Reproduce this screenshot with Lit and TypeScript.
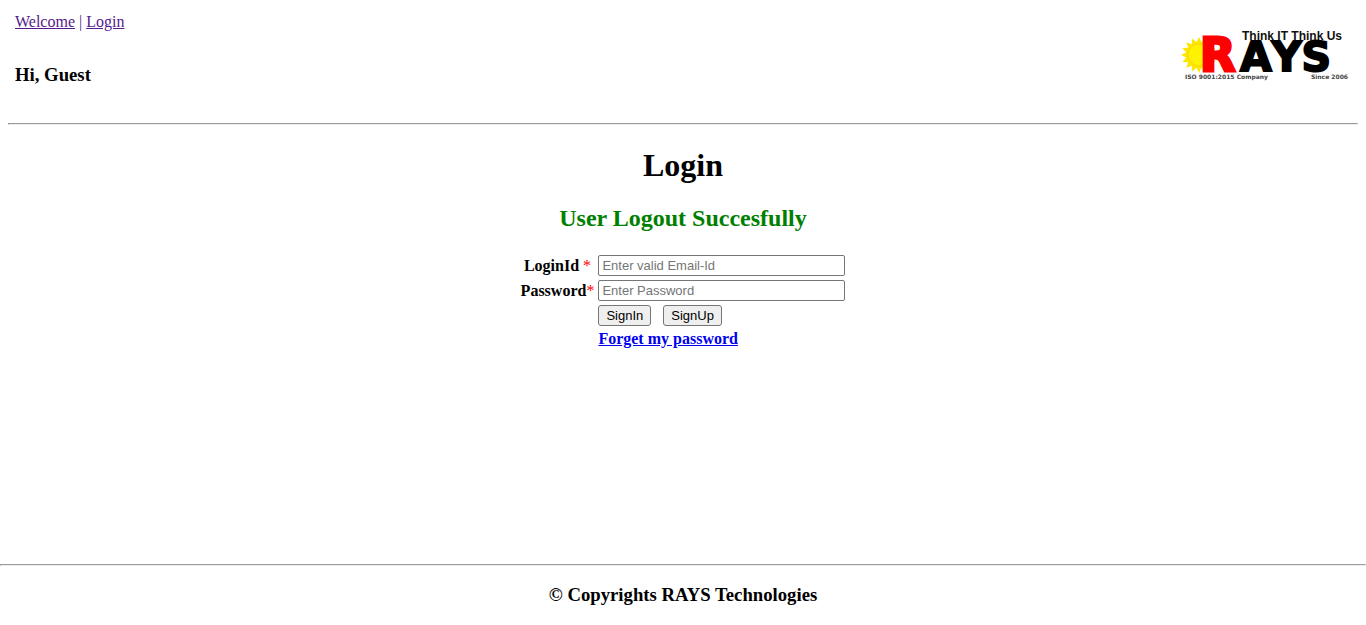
import { LitElement, html, css, svg } from "lit";
import { customElement } from "lit/decorators.js";

// Sixteen-pointed sun behind the wordmark.
const sunPoints = Array.from({ length: 32 }, (_, i) => {
  const r = i % 2 ? 13 : 18;
  const a = (i * Math.PI) / 16;
  return `${(19 + r * Math.cos(a)).toFixed(1)},${(25 + r * Math.sin(a)).toFixed(1)}`;
}).join(" ");

@customElement("rays-logo")
class RaysLogo extends LitElement {
  static styles = css`
    :host { display: block; }
    .logo { display: block; overflow: visible; }
    text { font-family: "DejaVu Sans", sans-serif; font-weight: bold; font-kerning: none; }
    .initial { font-size: 46px; fill: #f00; stroke: #f00; stroke-width: 3px; }
    .name { font-size: 41px; fill: #000; stroke: #000; stroke-width: 2px; }
    .tagline { font-family: "Liberation Sans", sans-serif; font-size: 12px; fill: #111; }
    .note { font-size: 6px; fill: #444; }
  `;
  render() {
    return html`<svg class="logo" width="172" height="50" viewBox="0 0 172 50" role="img" aria-label="RAYS">
      ${svg`<polygon points=${sunPoints} fill="#ffe600"/>
      <circle cx="19" cy="25" r="11" fill="#fff200" stroke="#f5d800" stroke-width="1"/>`}
      <text class="initial" x="20" y="41">R</text>
      <text class="name" x="60" y="41">AYS</text>
      <text class="tagline" x="62" y="10">Think IT Think Us</text>
      <text class="note" x="5" y="49">ISO 9001:2015 Company</text>
      <text class="note" x="168" y="49" text-anchor="end">Since 2006</text>
    </svg>`;
  }
}

@customElement("app-root")
class AppRoot extends LitElement {
  static styles = css`
    :host {
      display: flex;
      flex-direction: column;
      min-height: 100vh;
      color: #000;
      background: #fff;
      font-family: "Liberation Serif", "Times New Roman", serif;
      font-size: 16px;
      line-height: 18px;
    }
    hr { margin: 0; width: auto; }
    h1, h2, h3 { margin: 0; line-height: normal; }
    .top { padding: 0 8px; }
    .bar {
      display: flex;
      justify-content: space-between;
      align-items: flex-start;
      padding: 13px 6px 37px 7px;
    }
    .nav { color: #551a8b; margin-bottom: 33px; }
    .visited { color: #551a8b; }
    .brand { padding-top: 17px; }
    main {
      flex: 1;
      display: flex;
      flex-direction: column;
      align-items: center;
      padding: 22px 8px;
    }
    h1 { font-size: 32px; margin-bottom: 21px; }
    h2 { font-size: 24px; margin-bottom: 23px; color: #008000; }
    .form {
      display: grid;
      grid-template-columns: auto 247px;
      gap: 4px;
      align-items: center;
    }
    .label { font-weight: bold; text-align: center; }
    .required { color: #f00; font-weight: normal; }
    .second { grid-column: 2; }
    .field, .button {
      box-sizing: border-box;
      height: 21px;
      margin: 0;
      border: 1px solid #767676;
      font-family: "Liberation Sans", Arial, sans-serif;
      font-size: 13px;
      line-height: 15px;
      color: #000;
    }
    .field { width: 100%; padding: 1px 3px; border-radius: 2px; background: #fff; }
    .field::placeholder { color: #757575; }
    .button { padding: 1px 7px; border-radius: 3px; background: #efefef; }
    .actions { display: flex; gap: 12px; }
    .forget { color: #00e; font-weight: bold; }
    footer { text-align: center; }
    footer h3 { margin: 18px 0 19px; }
  `;
  render() {
    return html`
      <header class="top">
        <div class="bar">
          <div>
            <nav class="nav"><a class="visited" href="#welcome">Welcome</a> | <a class="visited" href="#login">Login</a></nav>
            <h3>Hi, Guest</h3>
          </div>
          <rays-logo class="brand"></rays-logo>
        </div>
        <hr />
      </header>
      <main>
        <h1>Login</h1>
        <h2 role="status">User Logout Succesfully</h2>
        <form class="form" @submit=${(e: Event) => e.preventDefault()}>
          <label class="label" for="login">LoginId <span class="required">*</span></label>
          <input class="field" id="login" type="text" placeholder="Enter valid Email-Id" />
          <label class="label" for="password">Password<span class="required">*</span></label>
          <input class="field" id="password" type="password" placeholder="Enter Password" />
          <div class="actions second">
            <button class="button" type="submit">SignIn</button>
            <button class="button" type="button">SignUp</button>
          </div>
          <div class="second"><a class="forget" href="#forget">Forget my password</a></div>
        </form>
      </main>
      <footer>
        <hr />
        <h3>© Copyrights RAYS Technologies</h3>
      </footer>
    `;
  }
}
